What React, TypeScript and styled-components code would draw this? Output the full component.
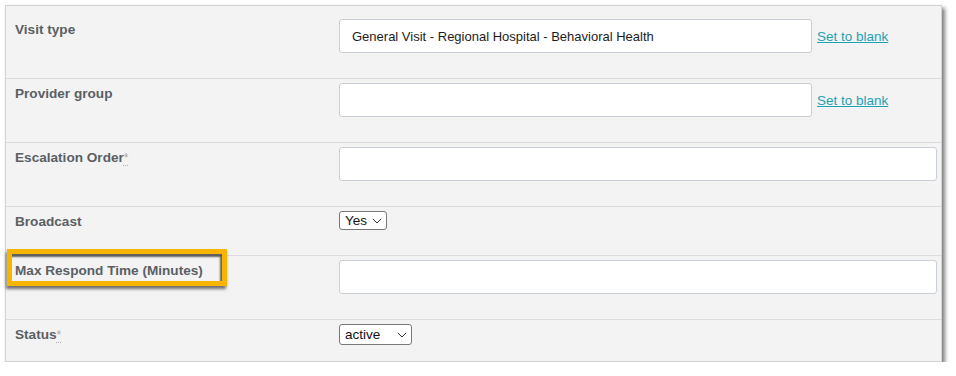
import styled, { createGlobalStyle } from "styled-components";

const GlobalStyle = createGlobalStyle`
  body {
    margin: 0;
    background: #ffffff;
    font-family: "Liberation Sans", Arial, sans-serif;
  }
`;

const Panel = styled.div`
  margin: 5px 0 0 5px;
  width: 937px;
  box-sizing: border-box;
  padding-top: 8px;
  background: #f3f3f3;
  border: 1px solid #d2d2d2;
  box-shadow: 3px 3px 4px rgba(0, 0, 0, 0.5);
`;

const Row = styled.div`
  display: grid;
  grid-template-columns: 333px 1fr;
  border-top: 1px solid #dcdcdc;

  &:first-child {
    border-top-color: transparent;
  }
`;

const LabelCell = styled.div`
  position: relative;
  padding: 7px 9px 5px;
  font-size: 13.6px;
  line-height: 16px;
  font-weight: bold;
  color: #5a5f64;
`;

const Req = styled.abbr`
  font-size: 12px;
  font-weight: normal;
  color: #a9a9a9;
  text-decoration: underline dotted #b5b5b5;
  text-underline-offset: 3px;
  cursor: help;
`;

const ValueCell = styled.div<{ $last?: boolean }>`
  display: flex;
  align-items: center;
  gap: 5px;
  padding: 4px 4px ${(p) => (p.$last ? "16px" : "25px")} 0;
`;

const TextInput = styled.input<{ $width?: number }>`
  width: ${(p) => (p.$width ? `${p.$width}px` : "100%")};
  height: 34px;
  box-sizing: border-box;
  padding: 0 12px;
  border: 1px solid #c9cfd6;
  border-radius: 3px;
  background: #ffffff;
  font-family: "Liberation Sans", Arial, sans-serif;
  font-size: 13px;
  color: #1c1c1c;
  outline: none;
`;

const BlankLink = styled.a`
  font-size: 13.5px;
  color: #1fa2b4;
  text-decoration: underline;
  white-space: nowrap;
  cursor: pointer;
`;

const SelectWrap = styled.div<{ $width: number; $height: number }>`
  position: relative;
  width: ${(p) => p.$width}px;
  height: ${(p) => p.$height}px;
  align-self: flex-start;

  svg {
    position: absolute;
    right: 5px;
    top: 50%;
    transform: translateY(-50%);
    pointer-events: none;
  }
`;

const NativeSelect = styled.select`
  appearance: none;
  -webkit-appearance: none;
  width: 100%;
  height: 100%;
  box-sizing: border-box;
  margin: 0;
  padding: 0 0 0 5px;
  border: 1px solid #787878;
  border-radius: 3px;
  background: #ffffff;
  font-family: "Liberation Sans", Arial, sans-serif;
  font-size: 13.5px;
  color: #111111;
  outline: none;
`;

const Highlight = styled.div`
  position: absolute;
  left: 1px;
  top: -7px;
  width: 220px;
  height: 37px;
  box-sizing: border-box;
  border: 5px solid #f7b500;
  box-shadow: -1px 3px 3px rgba(0, 0, 0, 0.55),
    inset -2px 3px 2px rgba(0, 0, 0, 0.6);
  pointer-events: none;
`;

const Chevron = () => (
  <svg width="10" height="6" viewBox="0 0 10 6">
    <path d="M0.8 0.8 L5 5 L9.2 0.8" fill="none" stroke="#333" strokeWidth="1" />
  </svg>
);

const Required = () => <Req title="required">*</Req>;

const Select = (props: { width: number; height: number; value: string; options: string[] }) => (
  <SelectWrap $width={props.width} $height={props.height}>
    <NativeSelect defaultValue={props.value}>
      {props.options.map((o) => (
        <option key={o} value={o}>
          {o}
        </option>
      ))}
    </NativeSelect>
    <Chevron />
  </SelectWrap>
);

const App = () => {
  return (
    <>
      <GlobalStyle />
      <Panel>
        <Row>
          <LabelCell>Visit type</LabelCell>
          <ValueCell>
            <TextInput
              $width={473}
              defaultValue="General Visit - Regional Hospital - Behavioral Health"
            />
            <BlankLink>Set to blank</BlankLink>
          </ValueCell>
        </Row>
        <Row>
          <LabelCell>Provider group</LabelCell>
          <ValueCell>
            <TextInput $width={473} />
            <BlankLink>Set to blank</BlankLink>
          </ValueCell>
        </Row>
        <Row>
          <LabelCell>
            Escalation Order
            <Required />
          </LabelCell>
          <ValueCell>
            <TextInput />
          </ValueCell>
        </Row>
        <Row>
          <LabelCell>Broadcast</LabelCell>
          <ValueCell>
            <Select width={48} height={19} value="Yes" options={["Yes", "No"]} />
          </ValueCell>
        </Row>
        <Row>
          <LabelCell>
            Max Respond Time (Minutes)
            <Highlight />
          </LabelCell>
          <ValueCell>
            <TextInput />
          </ValueCell>
        </Row>
        <Row>
          <LabelCell>
            Status
            <Required />
          </LabelCell>
          <ValueCell $last>
            <Select width={73} height={21} value="active" options={["active", "inactive"]} />
          </ValueCell>
        </Row>
      </Panel>
    </>
  );
};

export default App;
